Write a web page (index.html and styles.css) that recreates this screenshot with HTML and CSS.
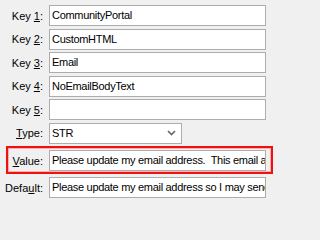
FILE: index.html
```html
<!DOCTYPE html>
<html>
<head>
<meta charset="utf-8">
<link rel="stylesheet" href="styles.css">
</head>
<body>
<div class="form">
  <div class="row"><label class="lbl">Key <u>1</u>:</label><div class="field">CommunityPortal</div></div>
  <div class="row"><label class="lbl">Key <u>2</u>:</label><div class="field">CustomHTML</div></div>
  <div class="row"><label class="lbl">Key <u>3</u>:</label><div class="field">Email</div></div>
  <div class="row"><label class="lbl">Key <u>4</u>:</label><div class="field">NoEmailBodyText</div></div>
  <div class="row"><label class="lbl">Key <u>5</u>:</label><div class="field"></div></div>
  <div class="row"><label class="lbl"><u>T</u>ype:</label><div class="field combo"><span class="combo-text">STR</span><svg class="chev" width="9" height="6" viewBox="0 0 9 6"><path d="M1 1 L4.5 4.5 L8 1" fill="none" stroke="#666" stroke-width="1.6"/></svg></div></div>
  <div class="row highlight"><label class="lbl"><u>V</u>alue:</label><div class="field">Please update my email address.&nbsp; This email address is no longer valid</div></div>
  <div class="row"><label class="lbl">Defa<u>u</u>lt:</label><div class="field">Please update my email address so I may send you the details</div></div>
</div>
</body>
</html>
```
FILE: styles.css
```css
html, body {
  margin: 0;
  padding: 0;
  background: #f0f0f0;
}
.form {
  width: 271px;
  display: flex;
  flex-direction: column;
  gap: 2.5px;
  padding-top: 5px;
  font-family: "Liberation Sans", Arial, sans-serif;
  font-size: 11px;
  color: #000;
}
.row {
  display: flex;
  align-items: center;
  gap: 6px;
  height: 21px;
}
.lbl {
  width: 43px;
  text-align: right;
  flex: none;
  white-space: nowrap;
}
.lbl u {
  text-underline-offset: 1px;
}
.field {
  box-sizing: border-box;
  width: 217px;
  height: 21px;
  border: 1px solid #adadad;
  background: #fff;
  padding: 0 2px;
  line-height: 19px;
  white-space: nowrap;
  overflow: hidden;
  color: #000;
  letter-spacing: -0.3px;
}
.combo {
  width: 133px;
  display: flex;
  align-items: center;
  justify-content: space-between;
  padding-right: 5px;
}
.chev {
  flex: none;
}
.highlight {
  position: relative;
  margin-top: 4px;
  margin-bottom: 3.5px;
}
.highlight::before {
  content: "";
  position: absolute;
  left: 6px;
  right: -2px;
  top: -4px;
  bottom: -3px;
  border: 2px solid #f01010;
  box-shadow: inset 0 0 0 1px #f7b0b0;
  pointer-events: none;
}
```
